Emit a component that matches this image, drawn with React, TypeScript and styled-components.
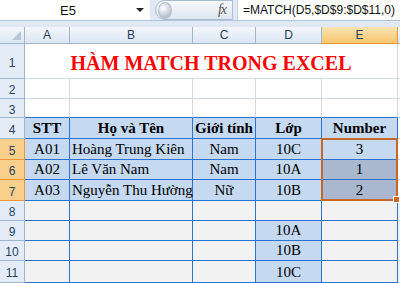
import * as React from "react";
import styled, { createGlobalStyle } from "styled-components";

const Global = createGlobalStyle`
  html, body { margin: 0; padding: 0; background: #fff; }
  body { width: 400px; height: 283px; overflow: hidden; }
`;

const Page = styled.div`
  width: 400px;
  height: 283px;
  overflow: hidden;
  display: flex;
  flex-direction: column;
  background: #dfe8f3;
`;

const FormulaBar = styled.div`
  display: flex;
  height: 20px;
  align-items: stretch;
  border-bottom: 1px solid #b1c3d9;
  background: #dfe8f3;
`;

const NameBox = styled.div`
  width: 150px;
  display: flex;
  align-items: center;
  background: #fff;
  font: 13px "Liberation Sans", Arial, sans-serif;
  color: #111;
`;

const NameText = styled.span`
  flex: 1;
  text-align: center;
`;

const Arrow = styled.span`
  width: 0;
  height: 0;
  border-left: 4px solid transparent;
  border-right: 4px solid transparent;
  border-top: 4px solid #222;
  margin-right: 6px;
`;

const FxButton = styled.div`
  width: 78px;
  margin-left: 5px;
  border: 1px solid #a9bbd3;
  border-radius: 10px 0 0 10px;
  background: linear-gradient(#f7f9fc, #dfe6ef);
  display: flex;
  align-items: center;
  justify-content: space-between;
  padding: 0 6px 0 2px;
  box-sizing: border-box;
`;

const Knob = styled.span`
  width: 12px;
  height: 15px;
  border-radius: 50%;
  background: radial-gradient(circle at 35% 35%, #ffffff, #b9c3d0 70%);
  border: 1px solid #b4bfcc;
`;

const Fx = styled.span`
  font: italic 14px "Liberation Serif", "Times New Roman", serif;
  color: #555;
  letter-spacing: -1px;
`;

const FormulaInput = styled.div`
  flex: 1;
  margin-left: 4px;
  background: #fff;
  border-left: 1px solid #c4d1e2;
  display: flex;
  align-items: center;
  padding-left: 5px;
  font: 12px "Liberation Sans", Arial, sans-serif;
  color: #111;
  white-space: nowrap;
  overflow: hidden;
`;

const Spacer = styled.div`
  height: 6px;
  background: #dfe8f3;
`;

const Sheet = styled.div`
  display: grid;
  grid-template-columns: 25px 45px 123px 63px 66px 76px 1fr;
  grid-template-rows: 17px 35px 20px 19px 21px 21px 20px 21px 20px 20px 20px 22px;
  background: #fff;
`;

const Corner = styled.div`
  background: linear-gradient(#f3f6fb, #dde7f3);
  border-right: 1px solid #9eb6ce;
  border-bottom: 1px solid #9eb6ce;
  display: flex;
  align-items: flex-end;
  justify-content: flex-end;
  padding: 0 3px 3px 0;
`;

const Tri = styled.span`
  width: 0;
  height: 0;
  border-left: 9px solid transparent;
  border-bottom: 9px solid #b8c6d6;
`;

const ColHead = styled.div<{ $active?: boolean }>`
  display: flex;
  align-items: center;
  justify-content: center;
  font: 12px "Liberation Sans", Arial, sans-serif;
  color: #27415f;
  background: ${p => p.$active ? "linear-gradient(#fbe3b2, #f6c66f)" : "linear-gradient(#f4f7fc, #dce6f2)"};
  border-right: 1px solid ${p => p.$active ? "#f29536" : "#9eb6ce"};
  border-bottom: 1px solid ${p => p.$active ? "#f29536" : "#9eb6ce"};
`;

const RowHead = styled.div<{ $active?: boolean }>`
  display: flex;
  align-items: center;
  justify-content: center;
  padding-top: 3px;
  box-sizing: border-box;
  font: 12px "Liberation Sans", Arial, sans-serif;
  color: #27415f;
  background: ${p => p.$active ? "#f9cf8c" : "#e4ecf7"};
  border-right: 1px solid ${p => p.$active ? "#f29536" : "#9eb6ce"};
  border-bottom: 1px solid ${p => p.$active ? "#f29536" : "#9eb6ce"};
`;

const Cell = styled.div<{ $bg?: string; $line?: string; $top?: string; $left?: boolean; $bold?: boolean }>`
  position: relative;
  display: flex;
  align-items: flex-end;
  justify-content: ${p => p.$left ? "flex-start" : "center"};
  padding: 0 2px 1px;
  box-sizing: border-box;
  white-space: nowrap;
  font: ${p => p.$bold ? "bold" : "normal"} 15px "Liberation Serif", "Times New Roman", serif;
  line-height: 18px;
  color: #000;
  background: ${p => p.$bg || "#fff"};
  border-right: 1px solid ${p => p.$line || "#d0d7e5"};
  border-bottom: 1px solid ${p => p.$top || p.$line || "#d0d7e5"};
`;

const Title = styled.div`
  grid-column: 2 / 7;
  display: flex;
  align-items: center;
  justify-content: center;
  padding-top: 4px;
  font: bold 20px "Liberation Serif", "Times New Roman", serif;
  color: #ff0000;
  border-right: 1px solid #d0d7e5;
  border-bottom: 1px solid #d0d7e5;
`;

/* orange range outline over E5:E7, hung from the active cell */
const Selection = styled.div`
  position: absolute;
  left: -1px;
  top: -1px;
  width: 77px;
  height: 63px;
  box-sizing: border-box;
  border: 2px solid #c9672a;
  pointer-events: none;
  z-index: 2;
`;

const Handle = styled.span`
  position: absolute;
  right: -4px;
  bottom: -4px;
  width: 5px;
  height: 5px;
  background: #c9672a;
  border: 1px solid #fff;
`;

const BLUE = "#2a73cf";
const TABLE = "#c5d9f1";
const GREY = "#f2f2f2";
const SEL = "#aab8cf";

type Row = { n: number; cells: string[] };

const rows: Row[] = [
  { n: 4, cells: ["STT", "Họ và Tên", "Giới tính", "Lớp", "Number"] },
  { n: 5, cells: ["A01", "Hoàng Trung Kiên", "Nam", "10C", "3"] },
  { n: 6, cells: ["A02", "Lê Văn Nam", "Nam", "10A", "1"] },
  { n: 7, cells: ["A03", "Nguyễn Thu Hường", "Nữ", "10B", "2"] },
  { n: 8, cells: ["", "", "", "", ""] },
  { n: 9, cells: ["", "", "", "10A", ""] },
  { n: 10, cells: ["", "", "", "10B", ""] },
  { n: 11, cells: ["", "", "", "10C", ""] },
];

function cellBg(n: number, c: number) {
  if (n <= 7) {
    if (c === 4 && (n === 6 || n === 7)) return SEL;
    return TABLE;
  }
  if (c === 3 && n >= 9) return TABLE;
  return GREY;
}

export default function App() {
  const cols = ["A", "B", "C", "D", "E"];
  return (
    <Page>
      <Global />
      <FormulaBar>
        <NameBox>
          <NameText>E5</NameText>
          <Arrow />
        </NameBox>
        <FxButton>
          <Knob />
          <Fx>fx</Fx>
        </FxButton>
        <FormulaInput>=MATCH(D5,$D$9:$D$11,0)</FormulaInput>
      </FormulaBar>
      <Spacer />
      <Sheet>
        <Corner><Tri /></Corner>
        {cols.map(c => <ColHead key={c} $active={c === "E"}>{c}</ColHead>)}
        <ColHead />

        <RowHead>1</RowHead>
        <Title>HÀM MATCH TRONG EXCEL</Title>
        <Cell />

        <RowHead>2</RowHead>
        {cols.map(c => <Cell key={c} />)}
        <Cell />

        <RowHead>3</RowHead>
        {cols.map(c => <Cell key={c} $top={BLUE} />)}
        <Cell />

        {rows.map(r => (
          <React.Fragment key={r.n}>
            <RowHead $active={r.n >= 5 && r.n <= 7}>{r.n}</RowHead>
            {r.cells.map((t, i) => (
              <Cell
                key={i}
                $bg={cellBg(r.n, i)}
                $line={BLUE}
                $left={i === 1 && r.n > 4}
                $bold={r.n === 4}
              >
                {t}
                {r.n === 5 && i === 4 && <Selection><Handle /></Selection>}
              </Cell>
            ))}
            <Cell $bg={r.n <= 7 ? "#fff" : GREY} />
          </React.Fragment>
        ))}
      </Sheet>
    </Page>
  );
}
